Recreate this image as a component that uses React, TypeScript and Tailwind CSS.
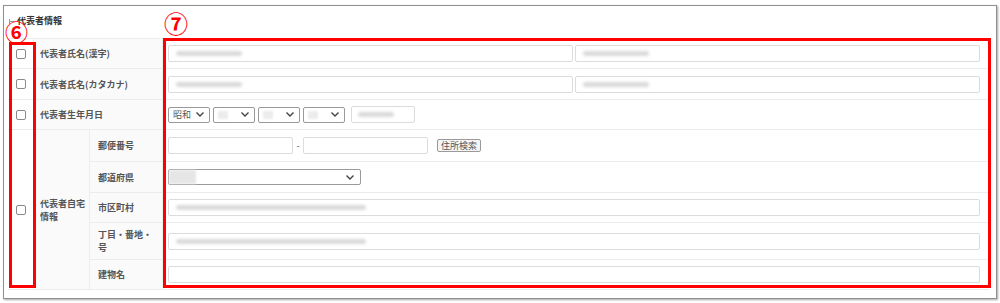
import React from 'react';

const font = { fontFamily: '"Noto Sans CJK JP", "Noto Sans", sans-serif' };

function Check() {
  return <div className="w-[10px] h-[10px] rounded-[2px] border border-[#8a8a8a] bg-white" />;
}

function Blur({ w = 66 }: { w?: number }) {
  return (
    <span className="block h-[5px] rounded-full bg-[#dadada] blur-[1.5px]" style={{ width: w }} />
  );
}

function TextBox({ className = '', blur }: { className?: string; blur?: number }) {
  return (
    <div className={`h-[17px] border border-[#dcdcdc] bg-white rounded-[2px] flex items-center pl-[7px] ${className}`}>
      {blur ? <Blur w={blur} /> : null}
    </div>
  );
}

function Chevron() {
  return (
    <svg width="10" height="7" viewBox="0 0 10 7" fill="none">
      <path d="M1.5 1.5 L5 5 L8.5 1.5" stroke="#444" strokeWidth="1.4" />
    </svg>
  );
}

function Select({ w, label, blur }: { w: number; label?: string; blur?: boolean }) {
  return (
    <div
      className="h-[16px] border border-[#9a9a9a] rounded-[2px] bg-white flex items-center justify-between pl-[4px] pr-[4px]"
      style={{ width: w }}
    >
      {label ? (
        <span className="text-[9px] text-[#555] leading-none">{label}</span>
      ) : blur ? (
        <span className="block w-[10px] h-[8px] bg-[#ececec] blur-[1px]" />
      ) : (
        <span />
      )}
      <Chevron />
    </div>
  );
}

const cell = 'border-b border-[#ececec]';
const labelCell = `${cell} border-r bg-[#fafafa] flex items-center text-[9px] font-bold text-[#555] leading-[13px]`;

export default function App() {
  return (
    <div className="w-[1000px] h-[303px] bg-white pt-[5px] pl-[3px]" style={font}>
      <div className="relative w-[994px] h-[294px] border border-[#8f8f8f] shadow-[1px_1px_2px_rgba(0,0,0,0.35)] bg-white">
        <div className="h-[32px] flex items-start pt-[8px] pl-[5px] gap-[3px]">
          <div className="mt-[5px] flex items-center">
            <div className="w-[1px] h-[5px] bg-[#999]" />
            <div className="w-[4px] h-[1px] bg-[#999]" />
          </div>
          <span className="text-[9px] font-bold text-[#333] leading-[13px]">代表者情報</span>
        </div>

        <div className="ml-[4px] w-[981px] border-t border-[#ececec] grid grid-cols-[26px_56px_73px_1fr] grid-rows-[30px_31px_30px_32px_31px_30px_37px_30px]">
          {/* row 1 */}
          <div className={`${cell} border-r flex items-center justify-center`}><Check /></div>
          <div className={`${labelCell} col-span-2 pl-[6px]`}>代表者氏名(漢字)</div>
          <div className={`${cell} flex items-center gap-[2px] pl-[5px] pr-[9px]`}>
            <TextBox className="flex-1" blur={66} />
            <TextBox className="flex-1" blur={66} />
          </div>

          {/* row 2 */}
          <div className={`${cell} border-r flex items-center justify-center`}><Check /></div>
          <div className={`${labelCell} col-span-2 pl-[6px]`}>代表者氏名(カタカナ)</div>
          <div className={`${cell} flex items-center gap-[2px] pl-[5px] pr-[9px]`}>
            <TextBox className="flex-1" blur={66} />
            <TextBox className="flex-1" blur={66} />
          </div>

          {/* row 3 */}
          <div className={`${cell} border-r flex items-center justify-center`}><Check /></div>
          <div className={`${labelCell} col-span-2 pl-[6px]`}>代表者生年月日</div>
          <div className={`${cell} flex items-center gap-[3px] pl-[5px]`}>
            <Select w={42} label="昭和" />
            <Select w={42} blur />
            <Select w={42} blur />
            <Select w={42} blur />
            <div className="ml-[3px] w-[64px] h-[17px] border border-[#dcdcdc] rounded-[2px] flex items-center pl-[6px]">
              <Blur w={36} />
            </div>
          </div>

          {/* address block */}
          <div className={`${cell} border-r row-span-5 flex items-center justify-center`}><Check /></div>
          <div className={`${labelCell} row-span-5 pl-[6px] pr-[2px]`}>代表者自宅情報</div>

          <div className={`${labelCell} pl-[8px] pr-[8px]`}>郵便番号</div>
          <div className={`${cell} flex items-center pl-[5px]`}>
            <TextBox className="w-[125px]" />
            <span className="w-[10px] text-center text-[9px] text-[#555]">-</span>
            <TextBox className="w-[125px]" />
            <div className="ml-[9px] h-[13px] px-[3px] border border-[#9a9a9a] rounded-[2px] bg-[#f5f5f5] flex items-center text-[9px] text-[#555] leading-none">
              住所検索
            </div>
          </div>

          <div className={`${labelCell} pl-[8px] pr-[8px]`}>都道府県</div>
          <div className={`${cell} flex items-center pl-[5px]`}>
            <div className="w-[193px] h-[16px] border border-[#9a9a9a] rounded-[2px] flex items-center justify-between pr-[5px]">
              <span className="block w-[27px] h-[14px] bg-[#e6e6e6] blur-[1px]" />
              <Chevron />
            </div>
          </div>

          <div className={`${labelCell} pl-[8px] pr-[8px]`}>市区町村</div>
          <div className={`${cell} flex items-center pl-[5px] pr-[9px]`}>
            <TextBox className="flex-1" blur={190} />
          </div>

          <div className={`${labelCell} pl-[8px] pr-[8px]`}>丁目・番地・号</div>
          <div className={`${cell} flex items-center pl-[5px] pr-[9px]`}>
            <TextBox className="flex-1" blur={190} />
          </div>

          <div className={`${labelCell} pl-[8px] pr-[8px]`}>建物名</div>
          <div className={`${cell} flex items-center pl-[5px] pr-[9px]`}>
            <TextBox className="flex-1" />
          </div>
        </div>

        {/* annotations */}
        <div className="absolute left-[5px] top-[36px] w-[27px] h-[246px] border-[3px] border-[#ff0000]" />
        <div className="absolute left-[159px] top-[32px] w-[828px] h-[250px] border-[3px] border-[#ff0000]" />
        <span className="absolute left-[1px] top-[14px] text-[23px] leading-none font-bold text-[#ff0000]">⑥</span>
        <span className="absolute left-[160px] top-[5px] text-[24px] leading-none font-bold text-[#ff0000]">⑦</span>
      </div>
    </div>
  );
}
